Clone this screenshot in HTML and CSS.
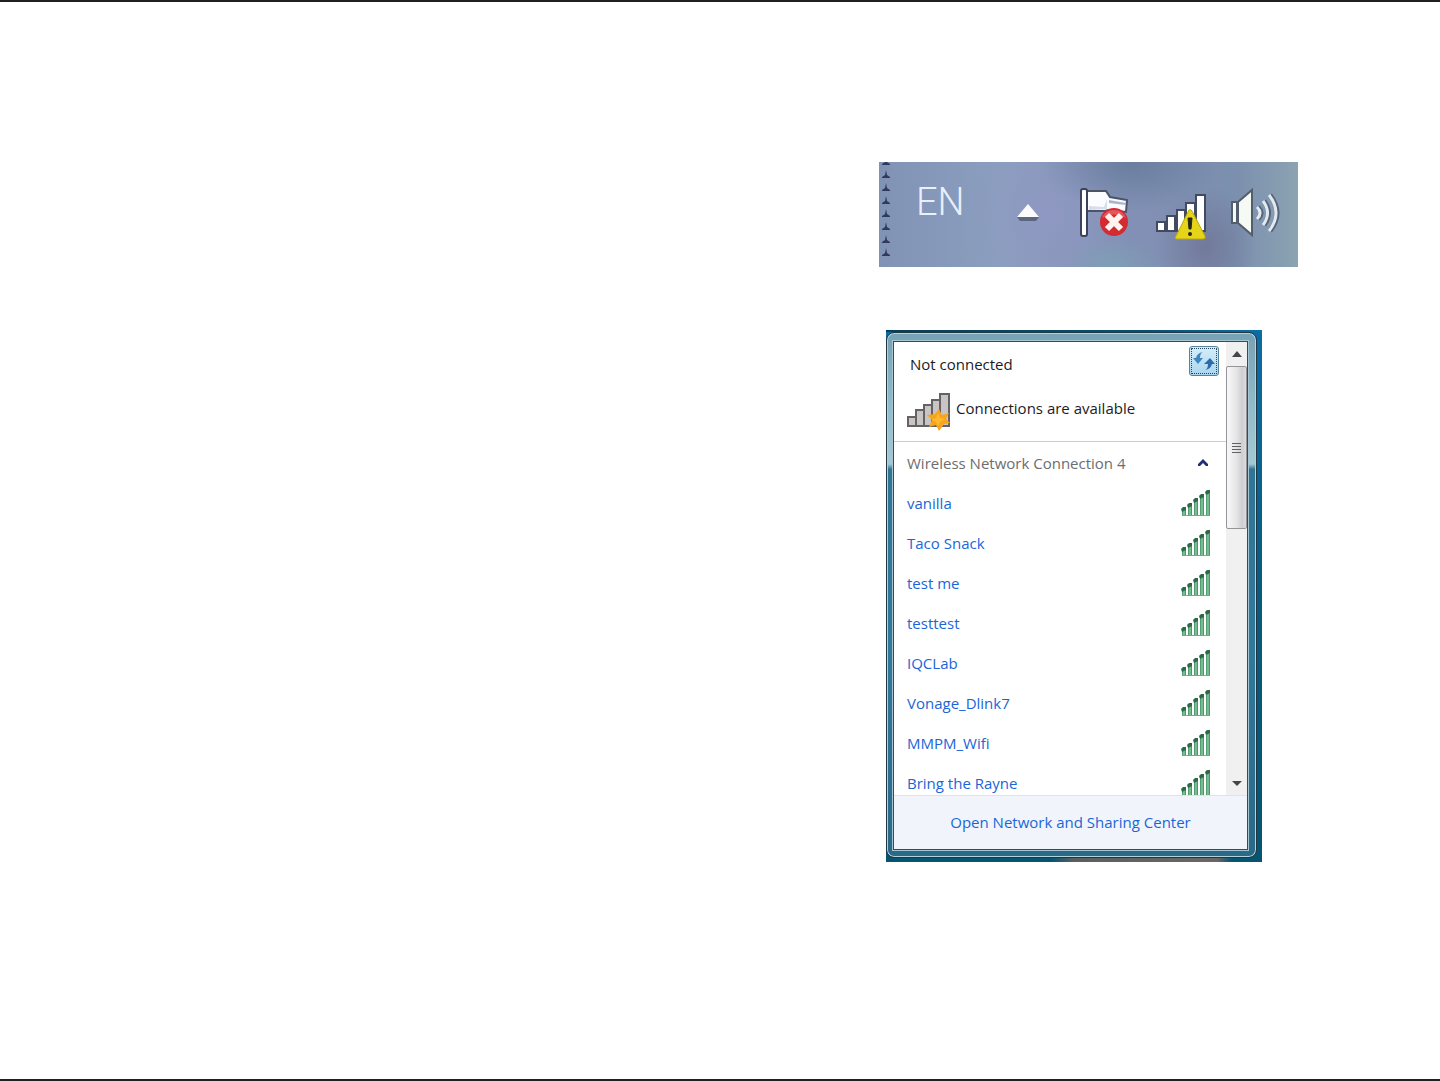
FILE: index.html
```html
<!DOCTYPE html>
<html lang="en">
<head>
    <meta charset="UTF-8">
    <meta name="viewport" content="width=device-width, initial-scale=1.0">
    <title>Wireless Networks</title>
    <link rel="stylesheet" href="styles.css">
</head>
<body>
    <svg class="sprite" width="0" height="0" aria-hidden="true">
        <defs>
            <linearGradient id="bar-green" x1="0" x2="1">
                <stop offset="0" stop-color="#3f8f62"/>
                <stop offset="0.5" stop-color="#8fcaa3"/>
                <stop offset="1" stop-color="#2b8a55"/>
            </linearGradient>
        </defs>
        <symbol id="signal" viewBox="0 0 30 26">
            <g fill="url(#bar-green)">
                <path d="M1 20l4-2v7H1z"/>
                <path d="M7 16l4-2v11H7z"/>
                <path d="M13 11l4-2v16h-4z"/>
                <path d="M19 7l4-2v20h-4z"/>
                <path d="M25 3l4-2v24h-4z"/>
            </g>
            <g fill="#2a6b49">
                <path d="M0 19l2-2h3v3l-4 2zM6 15l2-2h3v3l-4 2zM12 10l2-2h3v3l-4 2zM18 6l2-2h3v3l-4 2zM24 2l2-2h3v3l-4 2z"/>
            </g>
            <path d="M1 25.5h28" stroke="#72a98a"/>
        </symbol>
    </svg>

    <main class="page">
        <div class="shots">
            <div class="tray">
                <svg class="grip" width="10" height="105" viewBox="0 0 10 105" aria-hidden="true">
                    <defs>
                        <pattern id="grip-dots" width="10" height="13" patternUnits="userSpaceOnUse" y="-6">
                            <path d="M5 1l1 5 3 2v1H1V8l3-2z" fill="#303a5c"/>
                        </pattern>
                    </defs>
                    <rect width="10" height="97" fill="url(#grip-dots)"/>
                </svg>
                <span class="lang">EN</span>
                <button class="tray-btn arrow" aria-label="Show hidden icons">
                    <svg width="26" height="54" viewBox="0 0 26 54">
                        <path d="M2 31h22l-3 4H5z" fill="#59677f"/>
                        <path d="M13 18l11 13H2z" fill="#fbfbfd"/>
                    </svg>
                </button>
                <button class="tray-btn" aria-label="Action Center">
                    <svg width="54" height="54" viewBox="0 0 54 54">
                        <path d="M8 5h19l4 6 17 3-1 12-17-2-4 1H8z" fill="#fafcff" stroke="#4c5268" stroke-width="2"/>
                        <path d="M30 14l17 3v2l-17-2z" fill="#a9b6ca"/>
                        <path d="M10 20l15 1 3-8v10l-18 1z" fill="#d5deea"/>
                        <rect x="2" y="3" width="6" height="47" rx="2" fill="#fff" stroke="#3c4257" stroke-width="2"/>
                        <circle cx="35" cy="36" r="14" fill="#d42a32"/>
                        <path d="M23 32a13 13 0 0 1 24 0q-12-7-24 0z" fill="#e4565b"/>
                        <path d="M28 29l14 14M42 29L28 43" stroke="#fff5ee" stroke-width="6"/>
                    </svg>
                </button>
                <button class="tray-btn" aria-label="Network">
                    <svg width="54" height="54" viewBox="0 0 54 54">
                        <g fill="#fff" stroke="#414a61" stroke-width="2">
                            <rect x="3" y="36" width="8" height="9"/>
                            <rect x="13" y="30" width="8" height="15"/>
                            <rect x="23" y="24" width="8" height="21"/>
                            <rect x="32" y="17" width="9" height="28"/>
                            <rect x="42" y="9" width="9" height="36"/>
                        </g>
                        <path d="M35 24q2-1 3 1l13 25q1 3-2 3H23q-3 0-1-3z" fill="#e6d419" stroke="#b9a90f"/>
                        <path d="M34 32h4l-1 11h-2z" fill="#272719" stroke="#272719"/>
                        <circle cx="36" cy="48" r="2" fill="#272719"/>
                    </svg>
                </button>
                <button class="tray-btn" aria-label="Volume">
                    <svg width="54" height="54" viewBox="0 0 54 54">
                        <path d="M3 16h5v21H3z" fill="#f5faf4" stroke="#545d6c" stroke-width="2"/>
                        <path d="M9 16L23 4v45L9 37z" fill="#f5faf4" stroke="#545d6c" stroke-width="2"/>
                        <g fill="none" stroke="#58647b" stroke-width="5">
                            <path d="M29 21q6 6 0 12"/>
                            <path d="M35 15q9 12 0 24"/>
                            <path d="M41 9q14 18 0 36"/>
                        </g>
                        <g fill="none" stroke="#e2eaf1" stroke-width="3">
                            <path d="M28 21q6 6 0 12"/>
                            <path d="M34 15q9 12 0 24"/>
                            <path d="M40 9q14 18 0 36"/>
                        </g>
                    </svg>
                </button>
            </div>

            <div class="desktop">
                <div class="glass">
                    <section class="panel">
                        <div class="content">
                            <div class="networks">
                                <header class="status">
                                    <div class="status-top">
                                        <span>Not connected</span>
                                        <button class="refresh" aria-label="Refresh">
                                            <svg width="24" height="24" viewBox="0 0 24 24">
                                                <path d="M11 3Q8 4 8 9h3l-5 6-5-6h3q1-5 7-6z" fill="#3f86c0"/>
                                                <path d="M13 21q3-1 3-6h-4l6-6 5 6h-3q-1 5-7 6z" fill="#2d6baa"/>
                                            </svg>
                                        </button>
                                    </div>
                                    <div class="available">
                                        <svg width="45" height="38" viewBox="0 0 45 38" aria-hidden="true">
                                            <g fill="#c9c5c5" stroke="#666263" stroke-width="2">
                                                <rect x="1" y="24" width="8" height="9"/>
                                                <rect x="9" y="17" width="8" height="16"/>
                                                <rect x="17" y="12" width="8" height="21"/>
                                                <rect x="25" y="7" width="8" height="26"/>
                                                <rect x="33" y="1" width="9" height="32"/>
                                            </g>
                                            <path d="M32 16l3 6 7-2-3 6 4 4-6 1-5 7-3-6-7 2 3-7-5-5 8-1z" fill="#f9a51c"/>
                                            <path d="M31 20l2 5 5 1-5 3-2 4-2-4-5-2 5-2z" fill="#ffb92f"/>
                                        </svg>
                                        <span>Connections are available</span>
                                    </div>
                                </header>
                                <h2 class="adapter">
                                    <span>Wireless Network Connection 4</span>
                                    <button class="collapse" aria-label="Collapse">
                                        <svg width="12" height="8" viewBox="0 0 12 8">
                                            <path d="M1 7V5l5-5 5 5v2H9L6 4 3 7z" fill="#1f3078"/>
                                        </svg>
                                    </button>
                                </h2>
                                <ul class="list">
                                    <li><a href="#">vanilla <svg width="30" height="26" aria-hidden="true"><use href="#signal"/></svg></a></li>
                                    <li><a href="#">Taco Snack <svg width="30" height="26" aria-hidden="true"><use href="#signal"/></svg></a></li>
                                    <li><a href="#">test me <svg width="30" height="26" aria-hidden="true"><use href="#signal"/></svg></a></li>
                                    <li><a href="#">testtest <svg width="30" height="26" aria-hidden="true"><use href="#signal"/></svg></a></li>
                                    <li><a href="#">IQCLab <svg width="30" height="26" aria-hidden="true"><use href="#signal"/></svg></a></li>
                                    <li><a href="#">Vonage_Dlink7 <svg width="30" height="26" aria-hidden="true"><use href="#signal"/></svg></a></li>
                                    <li><a href="#">MMPM_Wifi <svg width="30" height="26" aria-hidden="true"><use href="#signal"/></svg></a></li>
                                    <li><a href="#">Bring the Rayne <svg width="30" height="26" aria-hidden="true"><use href="#signal"/></svg></a></li>
                                </ul>
                            </div>
                            <div class="scrollbar">
                                <button class="scroll-btn" aria-label="Scroll up">
                                    <svg width="10" height="6" viewBox="0 0 10 6"><path d="M5 0l5 6H0z" fill="#45464a"/></svg>
                                </button>
                                <div class="thumb">
                                    <span></span>
                                    <span></span>
                                    <span></span>
                                    <span></span>
                                </div>
                                <button class="scroll-btn down" aria-label="Scroll down">
                                    <svg width="10" height="5" viewBox="0 0 10 5"><path d="M0 0h10L5 5z" fill="#45464a"/></svg>
                                </button>
                            </div>
                        </div>
                        <footer class="footer">
                            <a href="#">Open Network and Sharing Center</a>
                        </footer>
                    </section>
                </div>
            </div>
        </div>
    </main>
</body>
</html>
```
FILE: styles.css
```css
* {
    margin: 0;
    padding: 0;
    box-sizing: border-box;
}

body {
    font-family: "Open Sans", "Noto Sans", sans-serif;
    font-size: 15px;
    line-height: 20px;
    color: #1c1c1f;
    background-color: #fff;
}

button {
    border: none;
    background: none;
    cursor: pointer;
}

svg {
    display: block;
    flex-shrink: 0;
}

a {
    color: #1a66d8;
    text-decoration: none;
}

.sprite {
    position: absolute;
}

.page {
    display: grid;
    grid-template-columns: 879fr 419fr 142fr;
    align-items: start;
    min-height: 100vh;
    padding-top: 160px;
    border-top: 2px solid #231f20;
    border-bottom: 2px solid #231f20;
}

.shots {
    grid-column: 2;
}

/* Taskbar */

.tray {
    display: flex;
    align-items: flex-start;
    height: 105px;
    padding-right: 15px;
    background:
        radial-gradient(ellipse 90px 50px at 60% 0, rgba(99, 121, 153, 0.8), transparent),
        radial-gradient(ellipse 50px 30px at 56% 100%, rgba(126, 160, 181, 0.9), transparent),
        radial-gradient(ellipse 80px 80px at 40% 50%, rgba(145, 151, 195, 0.8), transparent),
        radial-gradient(ellipse 50px 60px at 78% 80%, rgba(112, 116, 150, 0.8), transparent),
        linear-gradient(90deg, #8193b5, #8b9fbf 30%, #8290b5 60%, #7b8fae 85%, #8ba3b2);
}

.grip {
    margin-left: 2px;
}

.lang {
    margin: 16px auto 0 25px;
    font-family: "Roboto", sans-serif;
    font-size: 38px;
    font-weight: 300;
    line-height: 48px;
    color: #e9effc;
}

.tray-btn {
    margin: 24px 0 0 21px;
}

.tray-btn.arrow {
    margin-right: 17px;
}

/* Network popup */

.desktop {
    margin: 63px 36px 0 7px;
    padding: 2px 5px 4px 0;
    background:
        linear-gradient(90deg, #064059, #075273 70%, #0b6fa8) top / 100% 2px no-repeat,
        linear-gradient(90deg, transparent 44%, #57605f 50%, #6b6764 88%, transparent 92%) bottom / 100% 4px no-repeat,
        linear-gradient(#0b6ca5, #085a80 50%, #075470);
}

.glass {
    padding: 8px 8px 7px 6px;
    border: 1px solid #22363f;
    border-radius: 8px;
    box-shadow: inset 0 0 0 1px #b4d2dc;
    background: linear-gradient(#76a2b5, #92bdcc 15%, #a4c8d3 25%, #2f7596 26%, #31799b 60%, #2a6988);
}

.panel {
    border: 1px solid #344b58;
    outline: 1px solid #a5c6d2;
    background-color: #fff;
}

.content {
    display: flex;
    height: 453px;
    overflow: hidden;
}

.networks {
    flex: 1;
}

.status {
    height: 100px;
    padding-left: 13px;
    border-bottom: 1px solid #cccdd0;
}

.status-top {
    display: flex;
    justify-content: space-between;
    padding: 4px 7px 0 3px;
    line-height: 36px;
}

.refresh {
    display: grid;
    place-items: center;
    width: 30px;
    height: 30px;
    border: 1px solid #56829b;
    border-radius: 3px;
    outline: 1px dotted #24435e;
    outline-offset: -3px;
    background: linear-gradient(#d5edf8, #a9d6ef);
}

.available {
    display: flex;
    gap: 4px;
    margin-top: 11px;
    line-height: 30px;
}

.adapter {
    display: flex;
    justify-content: space-between;
    align-items: center;
    height: 41px;
    padding: 0 17px 0 13px;
    font-size: 15px;
    font-weight: normal;
    color: #6c6d70;
}

.list {
    list-style: none;
}

.list a {
    display: flex;
    justify-content: space-between;
    align-items: center;
    height: 40px;
    padding: 0 15px 0 13px;
}

.scrollbar {
    display: flex;
    flex-direction: column;
    width: 21px;
    background-color: #f0f0f1;
}

.scroll-btn {
    display: grid;
    place-items: center;
    height: 24px;
}

.scroll-btn.down {
    margin-top: auto;
}

.thumb {
    display: flex;
    flex-direction: column;
    justify-content: center;
    align-items: center;
    gap: 2px;
    height: 163px;
    border: 1px solid #959599;
    border-radius: 2px;
    background: linear-gradient(90deg, #f7f7f8, #e8e8ea 45%, #cfcfd3 80%, #dcdcdf);
}

.thumb span {
    width: 9px;
    height: 1px;
    background-color: #606166;
}

.footer {
    height: 54px;
    border-top: 1px solid #dde3ec;
    line-height: 52px;
    text-align: center;
    background-color: #f1f5fb;
}
```
